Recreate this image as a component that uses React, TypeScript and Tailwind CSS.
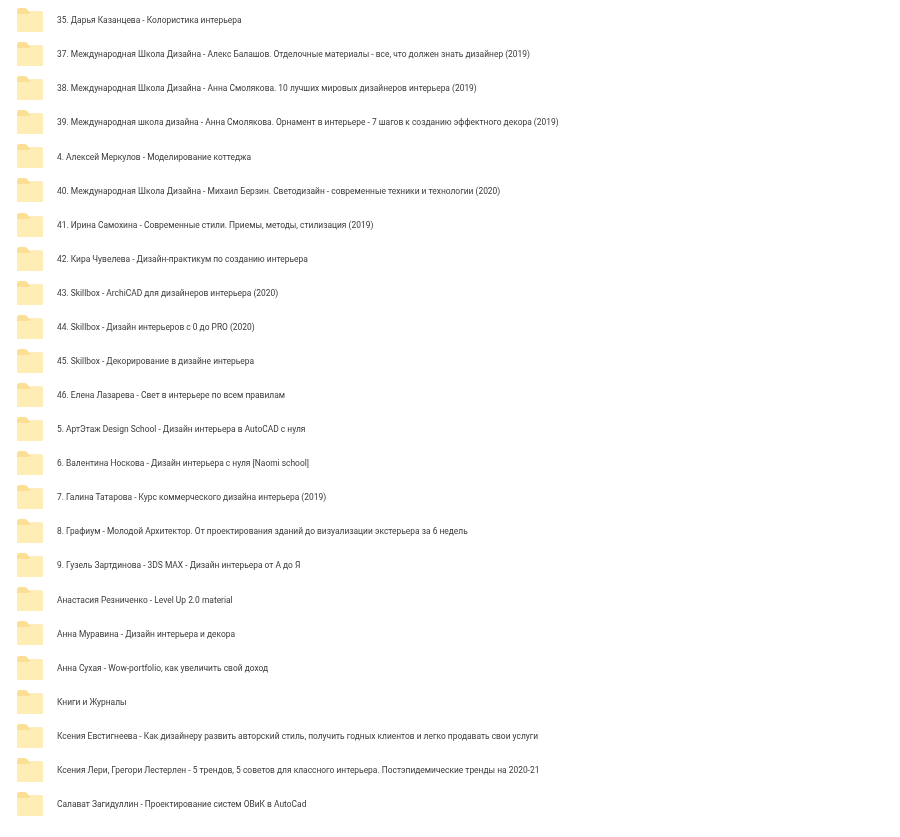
const rows = [
  "35. Дарья Казанцева - Колористика интерьера",
  "37. Международная Школа Дизайна - Алекс Балашов. Отделочные материалы - все, что должен знать дизайнер (2019)",
  "38. Международная Школа Дизайна - Анна Смолякова. 10 лучших мировых дизайнеров интерьера (2019)",
  "39. Международная школа дизайна - Анна Смолякова. Орнамент в интерьере - 7 шагов к созданию эффектного декора (2019)",
  "4. Алексей Меркулов - Моделирование коттеджа",
  "40. Международная Школа Дизайна - Михаил Берзин. Светодизайн - современные техники и технологии (2020)",
  "41. Ирина Самохина - Современные стили. Приемы, методы, стилизация (2019)",
  "42. Кира Чувелева - Дизайн-практикум по созданию интерьера",
  "43. Skillbox - ArchiCAD для дизайнеров интерьера (2020)",
  "44. Skillbox - Дизайн интерьеров с 0 до PRO (2020)",
  "45. Skillbox - Декорирование в дизайне интерьера",
  "46. Елена Лазарева - Свет в интерьере по всем правилам",
  "5. АртЭтаж Design School - Дизайн интерьера в AutoCAD с нуля",
  "6. Валентина Носкова - Дизайн интерьера с нуля [Naomi school]",
  "7. Галина Татарова - Курс коммерческого дизайна интерьера (2019)",
  "8. Графиум - Молодой Архитектор. От проектирования зданий до визуализации экстерьера за 6 недель",
  "9. Гузель Зартдинова - 3DS MAX - Дизайн интерьера от А до Я",
  "Анастасия Резниченко - Level Up 2.0 material",
  "Анна Муравина - Дизайн интерьера и декора",
  "Анна Сухая - Wow-portfolio, как увеличить свой доход",
  "Книги и Журналы",
  "Ксения Евстигнеева - Как дизайнеру развить авторский стиль, получить годных клиентов и легко продавать свои услуги",
  "Ксения Лери, Грегори Лестерлен - 5 трендов, 5 советов для классного интерьера. Постэпидемические тренды на 2020-21",
  "Салават Загидуллин - Проектирование систем ОВиК в AutoCad",
];

function FolderIcon() {
  return (
    <svg width="28" height="26" viewBox="0 0 28 26" className="shrink-0 blur-[0.6px]">
      <path d="M1 4Q1 1 3.5 1H8.5Q10.5 1 11.5 2.5L13 4.5H26V9H1Z" fill="#fbdf95" />
      <path d="M1 7H12Q13 7 14 6L15.5 4.5H26Q27 4.5 27 5.5V24Q27 25 26 25H2Q1 25 1 24Z" fill="#feeeb6" />
    </svg>
  );
}

export default function App() {
  return (
    <div className="min-h-[837px] w-[900px] bg-white pt-[3px] font-['Roboto',Arial,sans-serif]">
      {rows.map((title) => (
        <div key={title} className="flex h-[34.09px] items-center pl-[16px]">
          <FolderIcon />
          <span className="ml-[13px] whitespace-nowrap pt-[1px] text-[8.43px] text-[#3a3a3a] blur-[0.3px]">{title}</span>
        </div>
      ))}
    </div>
  );
}
